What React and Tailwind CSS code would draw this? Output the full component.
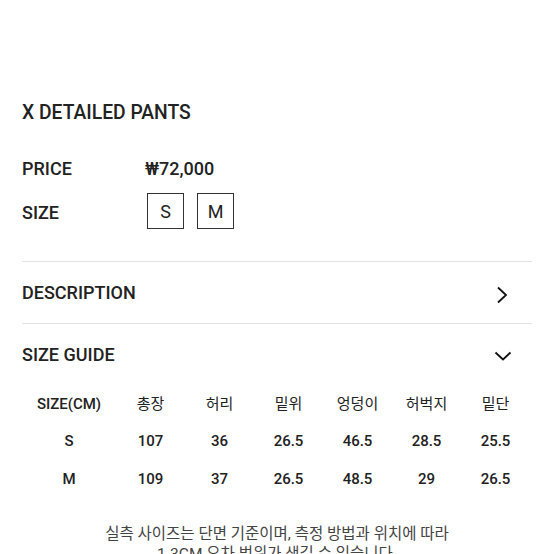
const rows = [
  ["S", "107", "36", "26.5", "46.5", "28.5", "25.5"],
  ["M", "109", "37", "26.5", "48.5", "29", "26.5"],
];
const head = ["SIZE(CM)", "총장", "허리", "밑위", "엉덩이", "허벅지", "밑단"];

function Row({ cells, height, kr }) {
  return (
    <div className={`grid grid-cols-[94px_repeat(6,69px)] items-center ${height}`}>
      {cells.map((c, i) => (
        <div
          key={i}
          className={`text-center ${kr && i > 0 ? "font-normal" : "font-medium"}`}
        >
          {c}
        </div>
      ))}
    </div>
  );
}

export default function App() {
  return (
    <div
      className="w-[554px] h-[554px] overflow-hidden bg-white text-[#222]"
      style={{ fontFamily: 'Roboto, "Noto Sans CJK KR", sans-serif' }}
    >
      <div className="px-[22px] pt-[99px]">
        <h1 className="text-[19.3px] leading-[28px] font-medium">X DETAILED PANTS</h1>

        <div className="mt-[29px] flex items-center h-[24px] text-[18px] font-medium">
          <span className="w-[123px]">PRICE</span>
          <span>₩72,000</span>
        </div>

        <div className="mt-[13px] flex items-center h-[36px] text-[18px] font-medium">
          <span className="w-[125px] pt-[3px]">SIZE</span>
          <div className="flex gap-[13px]">
            <div className="w-[37px] h-[36px] border-[1.5px] border-[#333] flex items-center justify-center font-normal">
              S
            </div>
            <div className="w-[37px] h-[36px] border-[1.5px] border-[#333] flex items-center justify-center font-normal">
              M
            </div>
          </div>
        </div>

        <div className="mt-[32px] border-t border-[#e3e3e3]" />
        <div className="h-[61px] flex items-center justify-between text-[18px] font-medium">
          <span>DESCRIPTION</span>
          <svg width="12" height="18" viewBox="0 0 12 18" className="mr-[24px] mt-[5px]">
            <path d="M2 1.5 L10 9 L2 16.5" fill="none" stroke="#111" strokeWidth="1.8" />
          </svg>
        </div>
        <div className="border-t border-[#e3e3e3]" />
        <div className="h-[61px] flex items-center justify-between text-[18px] font-medium">
          <span>SIZE GUIDE</span>
          <svg width="18" height="10" viewBox="0 0 18 10" className="mr-[20px] mt-[3px]">
            <path d="M1.5 1.5 L9 8.5 L16.5 1.5" fill="none" stroke="#111" strokeWidth="1.8" />
          </svg>
        </div>

        <div className="text-[15px]">
          <Row cells={head} height="h-[38px]" kr />
          <Row cells={rows[0]} height="h-[37px]" />
          <Row cells={rows[1]} height="h-[38px]" />
        </div>

        <p className="mt-[26px] text-center text-[15.5px] leading-[20px] text-[#444]">
          실측 사이즈는 단면 기준이며, 측정 방법과 위치에 따라
          <br />
          1-3CM 오차 범위가 생길 수 있습니다.
        </p>
      </div>
    </div>
  );
}
